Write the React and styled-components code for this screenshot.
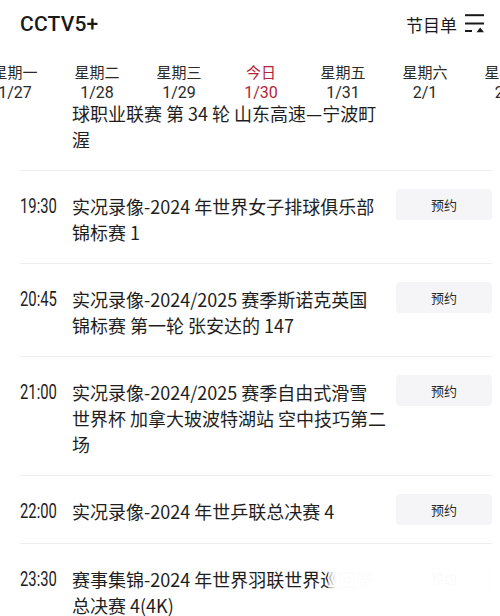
import React from "react";
import styled, { createGlobalStyle } from "styled-components";

const Global = createGlobalStyle`
  html, body { margin: 0; padding: 0; background: #fff; }
  body { font-family: "Noto Sans CJK SC", "Noto Sans", sans-serif; color: #1e1e1e; }
  #root { width: 500px; height: 616px; overflow: hidden; }
`;

const Page = styled.div`
  width: 500px;
  height: 616px;
  display: flex;
  flex-direction: column;
  overflow: hidden;
  background: #fff;
`;

const TopBar = styled.header`
  height: 48px;
  flex: none;
  display: flex;
  align-items: center;
  justify-content: space-between;
  padding: 0 14px 0 20px;
  position: relative;
  z-index: 2;
  background: #fff;
`;

const Channel = styled.div`
  font-family: Roboto, "Liberation Sans", sans-serif;
  font-size: 21px;
  font-weight: 500;
  letter-spacing: 0.2px;
  color: #1a1a1a;
`;

const Menu = styled.div`
  display: flex;
  align-items: center;
  gap: 7px;
  font-size: 17px;
  color: #1a1a1a;
`;

const DateStrip = styled.nav`
  height: 52px;
  flex: none;
  display: flex;
  margin-left: -26px;
  position: relative;
  z-index: 2;
  background: #fff;
`;

const DateTab = styled.div`
  width: 82px;
  flex: none;
  display: flex;
  flex-direction: column;
  align-items: center;
  padding-top: 14px;
  gap: 1px;
  color: ${(p) => (p.$active ? "#b3243a" : "#2a2a2a")};
`;

const Weekday = styled.span`
  font-size: 15px;
  line-height: 20px;
`;

const DateNum = styled.span`
  font-family: Roboto, "Liberation Sans", sans-serif;
  font-size: 16px;
  line-height: 20px;
`;

const ScrollArea = styled.div`
  flex: 1;
  overflow: hidden;
  position: relative;
`;

const List = styled.div`
  margin-top: -48px;
  padding: 0 8px 0 20px;
`;

const Row = styled.div`
  display: flex;
  align-items: flex-start;
  border-bottom: 1px solid #efefef;
  padding: 18px 0 18px;
  position: relative;
`;

const TimeCell = styled.div`
  width: 52px;
  flex: none;
  margin-top: 4px;
  height: 26px;
  overflow: visible;
`;

const TimeText = styled.span`
  display: inline-block;
  font-family: Roboto, "Liberation Sans", sans-serif;
  font-size: 20px;
  line-height: 26px;
  color: #1e1e1e;
  transform: scaleX(0.74);
  transform-origin: left center;
  white-space: nowrap;
`;

const Title = styled.div`
  flex: 1;
  margin-top: 4px;
  font-size: 18px;
  line-height: 26px;
  color: #1e1e1e;
`;

const Line = styled.div`
  white-space: nowrap;
`;

const Reserve = styled.button`
  width: 96px;
  height: 31px;
  flex: none;
  border: none;
  border-radius: 4px;
  background: #f5f5f7;
  font-family: "Noto Sans CJK SC", sans-serif;
  font-size: 13px;
  color: #2a2a2a;
  padding: 0;
  margin-left: 8px;
  visibility: ${(p) => (p.$hidden ? "hidden" : "visible")};
`;

const Veil = styled.div`
  position: absolute;
  left: 308px;
  right: -8px;
  top: 8px;
  bottom: 26px;
  background: linear-gradient(90deg, rgba(255,255,255,0.5) 0px, rgba(255,255,255,0.99) 8px, rgba(255,255,255,0.99) 80px, rgba(255,255,255,0.96) 100%);
  pointer-events: none;
`;

const MenuIcon = () => (
  <svg width="22" height="22" viewBox="0 0 22 22" fill="none">
    <rect x="1" y="1.2" width="19" height="2" fill="#1a1a1a" />
    <rect x="1" y="9.5" width="19" height="2" fill="#1a1a1a" />
    <rect x="1" y="17" width="7" height="2" fill="#1a1a1a" />
    <path d="M12.5 19.2 L16.2 14.6 L20 19.2 Z" fill="#1a1a1a" />
  </svg>
);

const days = [
  ["星期一", "1/27"],
  ["星期二", "1/28"],
  ["星期三", "1/29"],
  ["今日", "1/30", true],
  ["星期五", "1/31"],
  ["星期六", "2/1"],
  ["星期日", "2/2"],
];

const programs = [
  { time: "19:00", lines: ["实况录像-2024/2025赛季中国男子篮", "球职业联赛 第 34 轮 山东高速—宁波町", "渥"] },
  { time: "19:30", lines: ["实况录像-2024 年世界女子排球俱乐部", "锦标赛 1"], btn: true },
  { time: "20:45", lines: ["实况录像-2024/2025 赛季斯诺克英国", "锦标赛 第一轮 张安达的 147"], btn: true },
  { time: "21:00", lines: ["实况录像-2024/2025 赛季自由式滑雪", "世界杯 加拿大玻波特湖站 空中技巧第二", "场"], btn: true },
  { time: "22:00", lines: ["实况录像-2024 年世乒联总决赛 4"], btn: true },
  { time: "23:30", lines: ["赛事集锦-2024 年世界羽联世界巡回赛", "总决赛 4(4K)"], btn: true, veiled: true },
];

export default function App() {
  return (
    <Page>
      <Global />
      <TopBar>
        <Channel>CCTV5+</Channel>
        <Menu>
          节目单
          <MenuIcon />
        </Menu>
      </TopBar>
      <DateStrip>
        {days.map(([w, d, active]) => (
          <DateTab key={d} $active={active}>
            <Weekday>{w}</Weekday>
            <DateNum>{d}</DateNum>
          </DateTab>
        ))}
      </DateStrip>
      <ScrollArea>
        <List>
          {programs.map((p) => (
            <Row key={p.time}>
              <TimeCell>
                <TimeText>{p.time}</TimeText>
              </TimeCell>
              <Title>
                {p.lines.map((l) => (
                  <Line key={l}>{l}</Line>
                ))}
              </Title>
              <Reserve $hidden={!p.btn}>预约</Reserve>
              {p.veiled && <Veil />}
            </Row>
          ))}
        </List>
      </ScrollArea>
    </Page>
  );
}
